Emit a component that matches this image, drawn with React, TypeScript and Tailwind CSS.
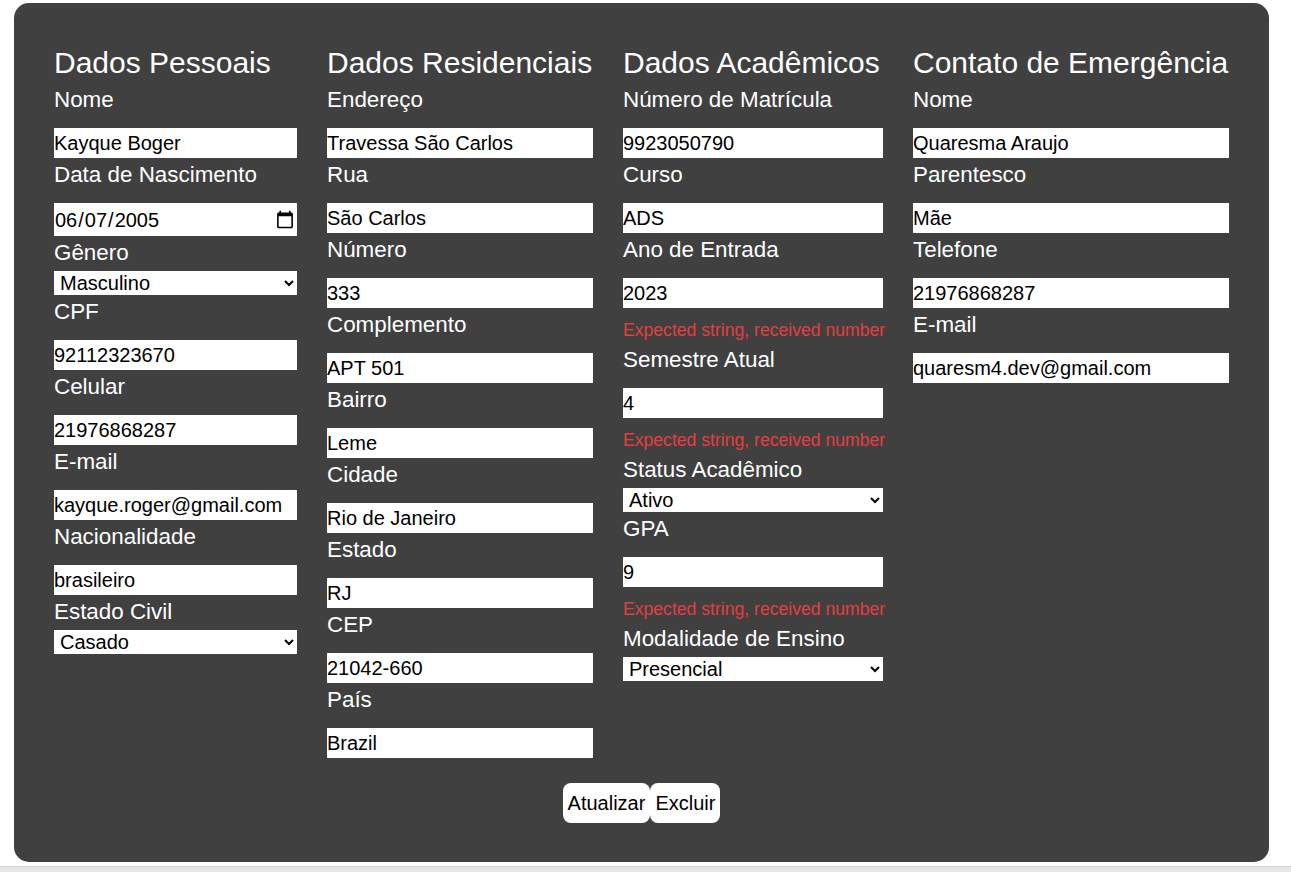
import React from 'react'

type Field = {
  label: string
  value: string
  type?: 'text' | 'date' | 'select'
  options?: string[]
  error?: string
}

type Section = { title: string; width: string; fields: Field[] }

const ERR = 'Expected string, received number'

const sections: Section[] = [
  {
    title: 'Dados Pessoais',
    width: 'w-[243px]',
    fields: [
      { label: 'Nome', value: 'Kayque Boger' },
      { label: 'Data de Nascimento', value: '2005-06-07', type: 'date' },
      { label: 'Gênero', value: 'Masculino', type: 'select', options: ['Masculino', 'Feminino', 'Outro'] },
      { label: 'CPF', value: '92112323670' },
      { label: 'Celular', value: '21976868287' },
      { label: 'E-mail', value: 'kayque.roger@gmail.com' },
      { label: 'Nacionalidade', value: 'brasileiro' },
      { label: 'Estado Civil', value: 'Casado', type: 'select', options: ['Solteiro', 'Casado', 'Divorciado', 'Viúvo'] },
    ],
  },
  {
    title: 'Dados Residenciais',
    width: 'w-[266px]',
    fields: [
      { label: 'Endereço', value: 'Travessa São Carlos' },
      { label: 'Rua', value: 'São Carlos' },
      { label: 'Número', value: '333' },
      { label: 'Complemento', value: 'APT 501' },
      { label: 'Bairro', value: 'Leme' },
      { label: 'Cidade', value: 'Rio de Janeiro' },
      { label: 'Estado', value: 'RJ' },
      { label: 'CEP', value: '21042-660' },
      { label: 'País', value: 'Brazil' },
    ],
  },
  {
    title: 'Dados Acadêmicos',
    width: 'w-[260px]',
    fields: [
      { label: 'Número de Matrícula', value: '9923050790' },
      { label: 'Curso', value: 'ADS' },
      { label: 'Ano de Entrada', value: '2023', error: ERR },
      { label: 'Semestre Atual', value: '4', error: ERR },
      { label: 'Status Acadêmico', value: 'Ativo', type: 'select', options: ['Ativo', 'Trancado', 'Formado'] },
      { label: 'GPA', value: '9', error: ERR },
      { label: 'Modalidade de Ensino', value: 'Presencial', type: 'select', options: ['Presencial', 'EAD', 'Híbrido'] },
    ],
  },
  {
    title: 'Contato de Emergência',
    width: 'w-[316px]',
    fields: [
      { label: 'Nome', value: 'Quaresma Araujo' },
      { label: 'Parentesco', value: 'Mãe' },
      { label: 'Telefone', value: '21976868287' },
      { label: 'E-mail', value: 'quaresm4.dev@gmail.com' },
    ],
  },
]

function FieldRow({ f, first }: { f: Field; first: boolean }) {
  const base = 'block w-full bg-white text-black text-[20px] border-0 outline-none'
  return (
    <div className={'flex flex-col ' + (first ? 'mt-[6px]' : 'mt-[4px]')}>
      <label className="text-[22.4px] leading-[26px] text-white">{f.label}</label>
      {f.type === 'select' ? (
        <select defaultValue={f.value} className={base + ' mt-[5px] h-[24px] pl-[2px] pr-[3px]'}>
          {f.options!.map(o => <option key={o}>{o}</option>)}
        </select>
      ) : (
        <input
          type={f.type === 'date' ? 'date' : 'text'}
          defaultValue={f.value}
          className={base + (f.type === 'date' ? ' mt-[15px] h-[33px]' : ' mt-[15px] h-[30px]')}
        />
      )}
      {f.error && (
        <span className="mt-[12px] mb-[3px] text-[17.6px] leading-[20px] text-[#e53e3e] whitespace-nowrap">{f.error}</span>
      )}
    </div>
  )
}

export default function App() {
  return (
    <div className="bg-white min-h-[872px]" style={{ fontFamily: '"Liberation Sans", Arial, sans-serif' }}>
      <div className="pt-[3px]">
        <div className="ml-[14px] w-[1255px] rounded-[15px] bg-[#404040] px-[40px] pt-[42px] pb-[39px]">
          <div className="flex gap-[30px] items-start">
            {sections.map(s => (
              <div key={s.title} className={'flex flex-col ' + s.width}>
                <h2 className="text-[30px] leading-[36px] text-white whitespace-nowrap">{s.title}</h2>
                {s.fields.map((f, i) => <FieldRow key={f.label} f={f} first={i === 0} />)}
              </div>
            ))}
          </div>
          <div className="mt-[25px] flex justify-center">
            <button className="h-[40px] px-[5px] bg-white text-black text-[20px] rounded-[8px]">Atualizar</button>
            <button className="h-[40px] px-[5px] bg-white text-black text-[20px] rounded-[8px]">Excluir</button>
          </div>
        </div>
        <div className="mt-[4px] h-[6px] border-t border-[#cfcfcf] bg-[#e6e6e6]" />
      </div>
    </div>
  )
}
